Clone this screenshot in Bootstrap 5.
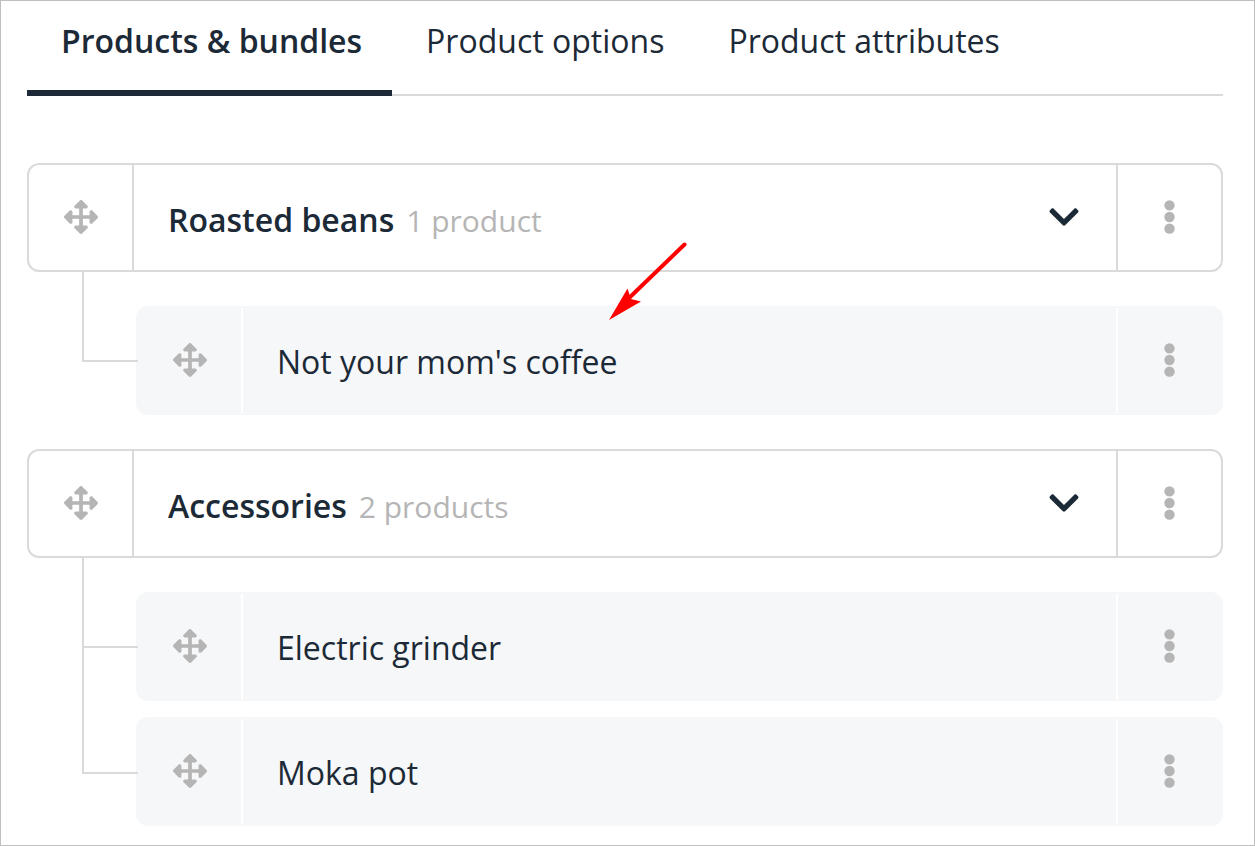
<!DOCTYPE html>
<html lang="en">
<head>
<meta charset="utf-8">
<meta name="viewport" content="width=device-width, initial-scale=1">
<title>Products &amp; bundles</title>
<link href="https://cdn.jsdelivr.net/npm/bootstrap@5.3.0/dist/css/bootstrap.min.css" rel="stylesheet">
<style>
  :root { --ink: #1c2936; --line: #dadada; --soft: #b5b5b5; --fill: #f5f7f9; --row-h: 109px; }
  body { font-family: "Open Sans", "Noto Sans", sans-serif; font-size: 32px; line-height: 44px; color: var(--ink); background: #fff; }
  .page { border: 1px solid #bfbfbf; padding: 0 31px 19px 26px; }

  .tabs { border-bottom: 2px solid var(--line); margin-bottom: 67px; }
  .tabs .nav-link { color: var(--ink); padding: 18px 30px 27px 34px; margin-bottom: -2px; border-bottom: 6px solid transparent; border-radius: 0; }
  .tabs .nav-link.active { font-weight: 600; border-bottom-color: var(--ink); }

  .tree { display: flex; flex-direction: column; gap: 34px; }
  .entry { height: var(--row-h); border: 2px solid var(--line); border-radius: 12px; }
  .cell-btn { flex: 0 0 105px; padding: 0 0 2px; border: 0; border-radius: 0; background: none; color: var(--soft); display: flex; align-items: center; justify-content: center; }
  .handle { border-right: 2px solid var(--line); cursor: move; }
  .more { border-left: 2px solid var(--line); }
  .title { padding: 6px 34px 0; }
  .group-name { font-weight: 600; }
  .count { font-size: 30px; color: var(--soft); margin-left: 12px; }
  .toggle { color: var(--ink); padding: 0 0 2px; border: 0; margin-right: 37px; line-height: 1; }
  svg { display: block; fill: currentColor; }

  .branch { padding: 34px 0 0 55px; display: flex; flex-direction: column; gap: 16px; }
  .branch .entry { background: var(--fill); border-color: var(--fill); }
  .branch .handle, .branch .more { border-color: #fff; }
  .branch .title { padding-top: 3px; }
  .elbow { flex: 0 0 56px; height: 90px; margin: -34px -2px 0 0; border: solid var(--line); border-width: 0 0 2px 2px; }
  .branch li + li .elbow { height: 127px; margin-top: -70px; }
  .pointer { left: 470px; top: -66px; color: #f00; pointer-events: none; }
</style>
</head>
<body>
<svg class="d-none" aria-hidden="true">
  <symbol id="move" viewBox="0 0 512 512"><path d="M352.201 425.775l-79.196 79.196c-9.373 9.373-24.568 9.373-33.941 0l-79.196-79.196c-15.119-15.119-4.411-40.971 16.971-40.97h51.162L228 284H127.196v51.162c0 21.382-25.851 32.09-40.971 16.971L7.029 272.937c-9.373-9.373-9.373-24.569 0-33.941L86.225 159.8c15.119-15.119 40.971-4.411 40.971 16.971V228H228V127.196h-51.23c-21.382 0-32.09-25.851-16.971-40.971l79.196-79.196c9.373-9.373 24.568-9.373 33.941 0l79.196 79.196c15.119 15.119 4.411 40.971-16.971 40.971h-51.162V228h100.804v-51.162c0-21.382 25.851-32.09 40.97-16.971l79.196 79.196c9.373 9.373 9.373 24.569 0 33.941L425.773 352.2c-15.119 15.119-40.971 4.411-40.97-16.971V284H284v100.804h51.23c21.382 0 32.09 25.851 16.971 40.971z"/></symbol>
  <symbol id="down" viewBox="0 0 448 512"><path d="M207.029 381.476L12.686 187.132c-9.373-9.373-9.373-24.569 0-33.941l22.667-22.667c9.357-9.357 24.522-9.375 33.901-.04L224 284.505l154.745-154.021c9.379-9.335 24.544-9.317 33.901.04l22.667 22.667c9.373 9.373 9.373 24.569 0 33.941L240.971 381.475c-9.373 9.372-24.569 9.372-33.942.001z"/></symbol>
  <symbol id="dots" viewBox="0 0 192 512"><circle cx="96" cy="80" r="78"/><circle cx="96" cy="256" r="78"/><circle cx="96" cy="432" r="78"/></symbol>
</svg>

<main class="page min-vh-100">
  <ul class="tabs nav flex-nowrap text-nowrap">
    <li class="nav-item"><a class="nav-link active" href="#products" aria-current="page">Products &amp; bundles</a></li>
    <li class="nav-item"><a class="nav-link" href="#options">Product options</a></li>
    <li class="nav-item"><a class="nav-link" href="#attributes">Product attributes</a></li>
  </ul>

  <ul class="tree list-unstyled mb-0">
    <li>
      <div class="entry d-flex">
        <button type="button" class="cell-btn handle" aria-label="Move Roasted beans"><svg width="34" height="34"><use href="#move"/></svg></button>
        <div class="d-flex flex-grow-1 align-items-center justify-content-between">
          <div class="title"><span class="group-name">Roasted beans</span><span class="count">1 product</span></div>
          <button type="button" class="btn toggle" aria-label="Collapse Roasted beans" aria-expanded="true"><svg width="30" height="34"><use href="#down"/></svg></button>
        </div>
        <button type="button" class="cell-btn more" aria-label="Roasted beans menu"><svg width="13" height="34"><use href="#dots"/></svg></button>
      </div>
      <ul class="branch list-unstyled">
        <li class="d-flex">
          <span class="elbow position-relative z-1"></span>
          <div class="entry d-flex flex-grow-1 position-relative">
            <button type="button" class="cell-btn handle" aria-label="Move Not your mom's coffee"><svg width="34" height="34"><use href="#move"/></svg></button>
            <div class="d-flex flex-grow-1 align-items-center"><span class="title">Not your mom's coffee</span></div>
            <button type="button" class="cell-btn more" aria-label="Not your mom's coffee menu"><svg width="13" height="34"><use href="#dots"/></svg></button>
            <svg class="pointer position-absolute" width="80" height="80" viewBox="0 0 80 80" aria-hidden="true"><path d="M76.500 2.500L20 57" fill="none" stroke="currentColor" stroke-width="4" stroke-linecap="round"/><path d="M1 78L19.500 46.500L23 57L33 59.500Z"/></svg>
          </div>
        </li>
      </ul>
    </li>
    <li>
      <div class="entry d-flex">
        <button type="button" class="cell-btn handle" aria-label="Move Accessories"><svg width="34" height="34"><use href="#move"/></svg></button>
        <div class="d-flex flex-grow-1 align-items-center justify-content-between">
          <div class="title"><span class="group-name">Accessories</span><span class="count">2 products</span></div>
          <button type="button" class="btn toggle" aria-label="Collapse Accessories" aria-expanded="true"><svg width="30" height="34"><use href="#down"/></svg></button>
        </div>
        <button type="button" class="cell-btn more" aria-label="Accessories menu"><svg width="13" height="34"><use href="#dots"/></svg></button>
      </div>
      <ul class="branch list-unstyled">
        <li class="d-flex">
          <span class="elbow position-relative z-1"></span>
          <div class="entry d-flex flex-grow-1">
            <button type="button" class="cell-btn handle" aria-label="Move Electric grinder"><svg width="34" height="34"><use href="#move"/></svg></button>
            <div class="d-flex flex-grow-1 align-items-center"><span class="title">Electric grinder</span></div>
            <button type="button" class="cell-btn more" aria-label="Electric grinder menu"><svg width="13" height="34"><use href="#dots"/></svg></button>
          </div>
        </li>
        <li class="d-flex">
          <span class="elbow position-relative z-1"></span>
          <div class="entry d-flex flex-grow-1">
            <button type="button" class="cell-btn handle" aria-label="Move Moka pot"><svg width="34" height="34"><use href="#move"/></svg></button>
            <div class="d-flex flex-grow-1 align-items-center"><span class="title">Moka pot</span></div>
            <button type="button" class="cell-btn more" aria-label="Moka pot menu"><svg width="13" height="34"><use href="#dots"/></svg></button>
          </div>
        </li>
      </ul>
    </li>
  </ul>
</main>
<script src="https://cdn.jsdelivr.net/npm/bootstrap@5.3.0/dist/js/bootstrap.bundle.min.js"></script>
</body>
</html>
